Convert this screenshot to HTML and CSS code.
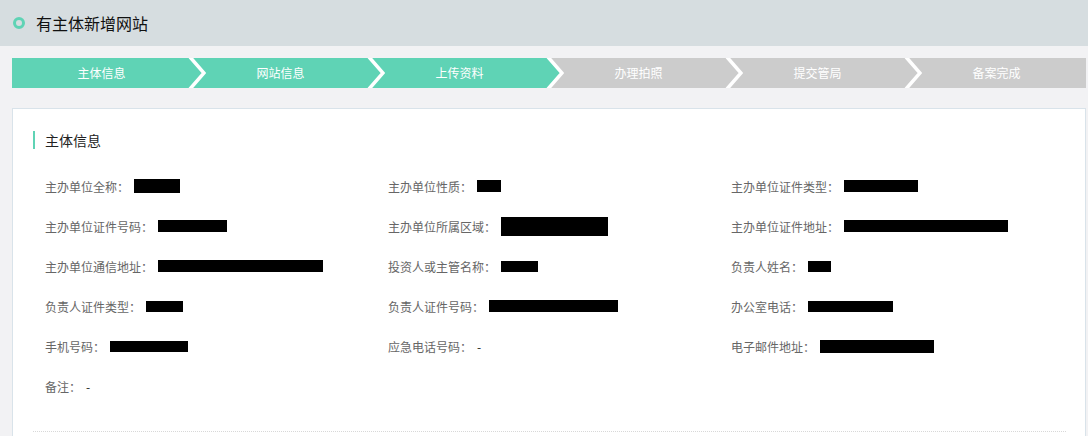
FILE: index.html
```html
<!DOCTYPE html>
<html lang="zh-CN">
<head>
<meta charset="utf-8">
<title>有主体新增网站</title>
<link rel="stylesheet" href="styles.css">
</head>
<body>
<header class="page-header">
  <span class="ring"></span>
  <h1 class="page-title">有主体新增网站</h1>
</header>
<main class="content">
  <ol class="steps">
    <li class="step done"><span>主体信息</span><svg class="tip" viewBox="0 0 18 30" width="18" height="30"><polygon points="0,0 2,0 16,15 2,30 0,30" fill="#5fd3b5"/><polyline points="2,-1 16,15 2,31" fill="none" stroke="#fff" stroke-width="3.5"/></svg></li>
    <li class="step done"><span>网站信息</span><svg class="tip" viewBox="0 0 18 30" width="18" height="30"><polygon points="0,0 2,0 16,15 2,30 0,30" fill="#5fd3b5"/><polyline points="2,-1 16,15 2,31" fill="none" stroke="#fff" stroke-width="3.5"/></svg></li>
    <li class="step done"><span>上传资料</span><svg class="tip" viewBox="0 0 18 30" width="18" height="30"><polygon points="0,0 2,0 16,15 2,30 0,30" fill="#5fd3b5"/><polyline points="2,-1 16,15 2,31" fill="none" stroke="#fff" stroke-width="3.5"/></svg></li>
    <li class="step todo"><span>办理拍照</span><svg class="tip" viewBox="0 0 18 30" width="18" height="30"><polygon points="0,0 2,0 16,15 2,30 0,30" fill="#cccccc"/><polyline points="2,-1 16,15 2,31" fill="none" stroke="#fff" stroke-width="3.5"/></svg></li>
    <li class="step todo"><span>提交管局</span><svg class="tip" viewBox="0 0 18 30" width="18" height="30"><polygon points="0,0 2,0 16,15 2,30 0,30" fill="#cccccc"/><polyline points="2,-1 16,15 2,31" fill="none" stroke="#fff" stroke-width="3.5"/></svg></li>
    <li class="step todo"><span>备案完成</span></li>
  </ol>

  <section class="card">
    <h2 class="section-title">主体信息</h2>
    <div class="fields">
      <div class="field"><span class="label">主办单位全称：</span><span class="mask" style="width:46px;height:14px"></span></div>
      <div class="field"><span class="label">主办单位性质：</span><span class="mask" style="width:24px;height:12px"></span></div>
      <div class="field"><span class="label">主办单位证件类型：</span><span class="mask" style="width:74px;height:12px"></span></div>

      <div class="field"><span class="label">主办单位证件号码：</span><span class="mask" style="width:69px;height:12px"></span></div>
      <div class="field"><span class="label">主办单位所属区域：</span><span class="mask" style="width:107px;height:19px"></span></div>
      <div class="field"><span class="label">主办单位证件地址：</span><span class="mask" style="width:164px;height:12px"></span></div>

      <div class="field"><span class="label">主办单位通信地址：</span><span class="mask" style="width:165px;height:12px"></span></div>
      <div class="field"><span class="label">投资人或主管名称：</span><span class="mask" style="width:37px;height:11px"></span></div>
      <div class="field"><span class="label">负责人姓名：</span><span class="mask" style="width:23px;height:11px"></span></div>

      <div class="field"><span class="label">负责人证件类型：</span><span class="mask" style="width:37px;height:11px"></span></div>
      <div class="field"><span class="label">负责人证件号码：</span><span class="mask" style="width:129px;height:12px"></span></div>
      <div class="field"><span class="label">办公室电话：</span><span class="mask" style="width:85px;height:11px"></span></div>

      <div class="field"><span class="label">手机号码：</span><span class="mask" style="width:78px;height:11px"></span></div>
      <div class="field"><span class="label">应急电话号码：</span><span class="value">-</span></div>
      <div class="field"><span class="label">电子邮件地址：</span><span class="mask" style="width:114px;height:13px"></span></div>

      <div class="field"><span class="label">备注：</span><span class="value">-</span></div>
    </div>
    <div class="divider"></div>
  </section>
</main>
</body>
</html>
```

FILE: styles.css
```css
* { box-sizing: border-box; }

html, body {
  margin: 0;
  padding: 0;
}

body {
  background: #f2f2f4;
  font-family: "Noto Sans CJK SC", "Noto Sans", "Liberation Sans", sans-serif;
  color: #333;
  overflow: hidden;
}

.page-header {
  height: 46px;
  background: #d6dde0;
  display: flex;
  align-items: center;
  padding-left: 13px;
  gap: 11px;
}

.ring {
  width: 12px;
  height: 12px;
  border: 3px solid #5fd3b5;
  border-radius: 50%;
  flex: none;
}

.page-title {
  margin: 0;
  font-size: 16px;
  font-weight: normal;
  color: #111;
  line-height: 20px;
}

.content {
  padding: 12px 2px 0 12px;
}

.steps {
  list-style: none;
  margin: 0;
  padding: 0;
  display: flex;
  height: 30px;
}

.step {
  position: relative;
  flex: 1 1 0;
  height: 30px;
  line-height: 30px;
  text-align: center;
  font-size: 12px;
  color: #fff;
}

.step.done { background: #5fd3b5; }
.step.todo { background: #cccccc; }

.step .tip {
  position: absolute;
  top: 0;
  left: calc(100% - 3px);
  z-index: 1;
  display: block;
}

.card {
  margin-top: 20px;
  background: #fff;
  border: 1px solid #d9e3ea;
  padding: 22px 19px 40px 20px;
}

.section-title {
  margin: 0;
  font-size: 14px;
  font-weight: normal;
  color: #222;
  line-height: 18px;
  border-left: 2px solid #5fd3b5;
  padding-left: 10px;
}

.fields {
  margin-top: 17px;
  padding-left: 12px;
  display: grid;
  grid-template-columns: 343px 343px 1fr;
}

.field {
  height: 40px;
  display: flex;
  align-items: center;
  font-size: 12px;
  white-space: nowrap;
}

.label {
  color: #666;
}

.value {
  margin-left: 5px;
  color: #222;
}

.mask {
  display: inline-block;
  background: #000;
  margin-left: 5px;
}

.divider {
  margin-top: 25px;
  border-top: 1px dotted #d8d8d8;
}
```
